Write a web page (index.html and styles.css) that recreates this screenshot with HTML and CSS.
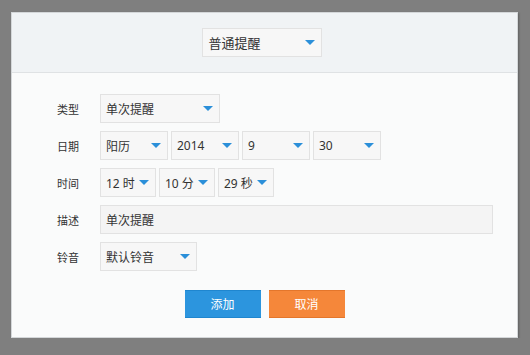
FILE: index.html
```html
<!DOCTYPE html>
<html lang="zh-CN">
<head>
  <meta charset="UTF-8" />
  <title>新建提醒</title>
  <link rel="stylesheet" href="styles.css">
</head>
<body>
  <div class="dialog">
    <div class="dialog-head">
      <div class="select head-select"><span>普通提醒</span><i class="arrow"></i></div>
    </div>

    <div class="dialog-body">
      <div class="row">
        <label>类型</label>
        <div class="select w-type"><span>单次提醒</span><i class="arrow"></i></div>
      </div>
      <div class="row">
        <label>日期</label>
        <div class="select w-date"><span>阳历</span><i class="arrow"></i></div>
        <div class="select w-date"><span>2014</span><i class="arrow"></i></div>
        <div class="select w-date"><span>9</span><i class="arrow"></i></div>
        <div class="select w-date"><span>30</span><i class="arrow"></i></div>
      </div>
      <div class="row">
        <label>时间</label>
        <div class="select w-time"><span>12 时</span><i class="arrow"></i></div>
        <div class="select w-time"><span>10 分</span><i class="arrow"></i></div>
        <div class="select w-time"><span>29 秒</span><i class="arrow"></i></div>
      </div>
      <div class="row">
        <label>描述</label>
        <div class="input">单次提醒</div>
      </div>
      <div class="row">
        <label>铃音</label>
        <div class="select w-ring"><span>默认铃音</span><i class="arrow"></i></div>
      </div>

      <div class="actions">
        <a href="#" class="btn btn-add">添加</a>
        <a href="#" class="btn btn-cancel">取消</a>
      </div>
    </div>
  </div>
</body>
</html>
```

FILE: styles.css
```css
body {
  margin: 0;
  padding: 12px 0 0 11px;
  background: #7f7f7f;
  font-family: "Noto Sans", "Noto Sans CJK SC", sans-serif;
  font-size: 12px;
  color: #333;
}

.dialog {
  width: 505px;
  height: 324px;
  background: #fafbfb;
  border: 1px solid #d4d7d9;
  box-shadow: 1px 1px 2px rgba(0, 0, 0, 0.25);
  display: flex;
  flex-direction: column;
}

.dialog-head {
  height: 59px;
  background: #f0f3f5;
  border-bottom: 1px solid #dfe2e4;
  display: flex;
  align-items: center;
  justify-content: center;
  padding-right: 6px;
}

.dialog-body {
  padding: 21px 0 0 45px;
  display: flex;
  flex-direction: column;
  gap: 8px;
}

.row {
  display: flex;
  align-items: center;
  gap: 3px;
}

.row label {
  width: 40px;
  font-size: 11px;
  color: #333;
}

.select {
  height: 27px;
  box-sizing: content-box;
  border: 1px solid #e2e2e2;
  background: #f7f7f7;
  display: flex;
  align-items: center;
  justify-content: space-between;
  padding: 0 5px 0 5px;
}

.select span {
  font-size: 12px;
  color: #333;
}

.head-select {
  width: 107px;
  padding: 0 5px 0 6px;
}

.head-select span {
  font-size: 13px;
}

.w-type { width: 108px; }
.w-date { width: 56px; }
.w-time { width: 44px; }
.w-ring { width: 85px; }

.arrow {
  width: 0;
  height: 0;
  border-left: 5px solid transparent;
  border-right: 5px solid transparent;
  border-top: 5px solid #2b8fd9;
  margin-right: 1px;
}

.input {
  width: 381px;
  height: 27px;
  border: 1px solid #e2e2e2;
  background: #f4f4f4;
  padding: 0 5px;
  display: flex;
  align-items: center;
  font-size: 12px;
}

.actions {
  display: flex;
  justify-content: center;
  gap: 8px;
  margin-top: 11px;
  padding-right: 45px;
}

.btn {
  width: 76px;
  height: 28px;
  display: flex;
  align-items: center;
  justify-content: center;
  color: #fff;
  font-size: 12px;
  text-decoration: none;
  box-sizing: border-box;
}

.btn-add {
  background: #2c95de;
  border-top: 1px solid #1f86cf;
  border-bottom: 1px solid #1f86cf;
}

.btn-cancel {
  background: #f5873a;
  border-top: 1px solid #e4762b;
  border-bottom: 1px solid #e4762b;
}
```
